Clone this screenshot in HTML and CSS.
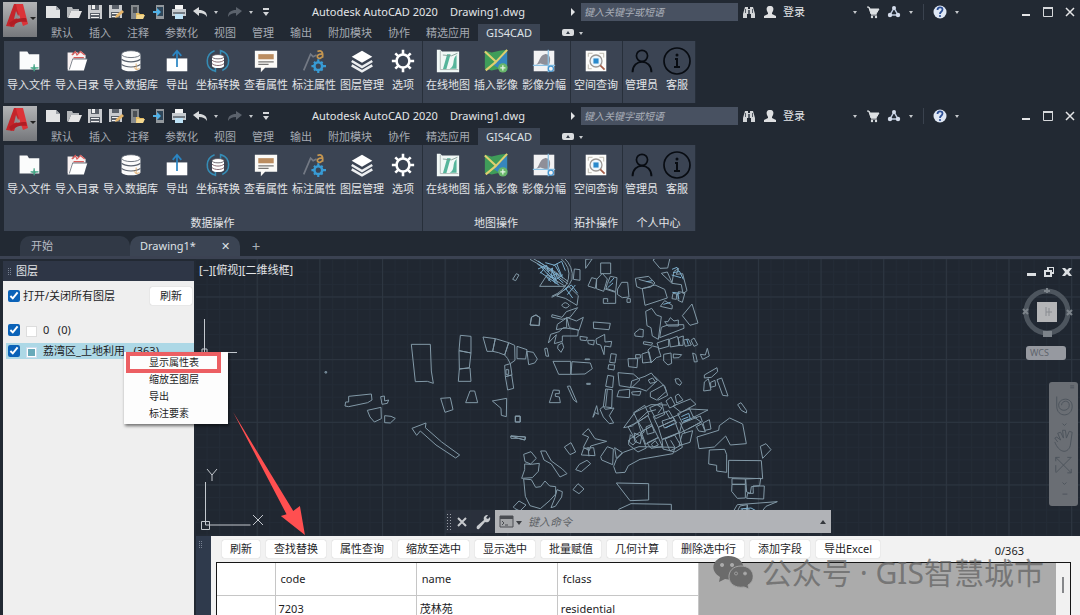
FILE: index.html
```html
<!DOCTYPE html>
<html lang="zh-CN">
<head>
<meta charset="utf-8">
<title>Autodesk AutoCAD 2020 - Drawing1.dwg</title>
<link rel="stylesheet" href="styles.css">
</head>
<body>
<svg class="sprite" aria-hidden="true">
  <symbol id="i-logo" viewBox="0 0 34 35"><path d="M11 2h8l-1 5-7 18-8-1z" fill="#c4252b"/><path d="M13 2h7l5 20-5 2-6-17z" fill="#dc3338"/><path d="M6 21c5-4 10-5 17-5l1 4c-8-1-12 1-16 5z" fill="#b01d24"/><path d="M13 9l3 7-5 1z" fill="#8d8f92"/><path d="M27 15h6l-3 3z" fill="#222"/></symbol>
  <symbol id="i-new" viewBox="0 0 16 16"><path d="M1 2h10l4 4v8H1z" fill="#e2e3e4"/><path d="M11 2v4h4z" fill="#9da2a8"/></symbol>
  <symbol id="i-open" viewBox="0 0 16 16"><path d="M1 13V3h5l1 2h6v2H5L2 14z" fill="#b4b7ba"/><path d="M5 7h11l-3 7H2z" fill="#e6e6e6"/></symbol>
  <symbol id="i-save" viewBox="0 0 16 16"><path d="M1 1h14v14H1z" fill="#c9cbce"/><path d="M4 1h8v5H4zM3 9h10v6H3z" fill="#5a6069"/><path d="M5 1h3v4H5zM4 10h8v1H4zm0 3h8v1H4z" fill="#f1f1f1"/></symbol>
  <symbol id="i-saveas" viewBox="0 0 16 16"><path d="M1 1h13v13H1z" fill="#c9cbce"/><path d="M4 1h7v4H4zM3 8h9v6H3z" fill="#5a6069"/><path d="M4 9h7v1H4zm0 3h6v1H4z" fill="#f1f1f1"/><path d="m7 14 1-3 6-5 2 2-6 5z" fill="#e4b46a"/></symbol>
  <symbol id="i-web" viewBox="0 0 16 16"><path d="M2 1h8v14H2z" fill="#85898c"/><path d="M4 3h4v6H4z" fill="#4b5055"/><path d="M7 9h3l1 1h4l-1 5H7z" fill="#e6bd62"/><path d="M8 11h8l-2 4H7z" fill="#f3d78e"/></symbol>
  <symbol id="i-mobile" viewBox="0 0 16 16"><path d="M6 1h8v14H6z" fill="#93989d"/><path d="M7 3h6v9H7z" fill="#30475a"/><path d="M3 7h4V4l4 4-4 4V9H3z" fill="#4fb1e8"/></symbol>
  <symbol id="i-print" viewBox="0 0 16 16"><path d="M4 1h8v4H4z" fill="#f4f4f4"/><path d="M1 5h14v7H1z" fill="#c7cbcf"/><path d="M2 8h12v2H2z" fill="#727a82"/><path d="M4 10h8v5H4z" fill="#bde1f5"/></symbol>
  <symbol id="i-undo" viewBox="0 0 16 16"><path d="m1 7 6-4v3c5 0 8 2 8 7-2-3-4-4-8-4v3z" fill="#d8dadc"/></symbol>
  <symbol id="i-redo" viewBox="0 0 16 16"><path d="M15 7 9 3v3c-5 0-8 2-8 7 2-3 4-4 8-4v3z" fill="#5b626c"/></symbol>
  <symbol id="i-caret" viewBox="0 0 8 16"><path d="M2 7h4L4 10z" fill="#c5c8cc"/></symbol>
  <symbol id="i-more" viewBox="0 0 8 16"><path d="M1 4h6v2H1zm0 4h6l-3 4z" fill="#d5d7da"/></symbol>
  <symbol id="i-right" viewBox="0 0 8 16"><path d="M2 4v8l4-4z" fill="#e1e3e5"/></symbol>
  <symbol id="i-find" viewBox="0 0 16 16"><path d="M4 3h3v2h2V3h3l2 7v4h-4v-4H6v4H2v-4z" fill="#d3d5d8"/><path d="M7 6h2v4H7zM4 5h1v4H4zm7 0h1v4h-1z" fill="#555c66"/></symbol>
  <symbol id="i-user" viewBox="0 0 16 16"><path d="M8 2c3 0 4 2 3 5l-1 2v1l4 2v2H2v-2l4-2V9L5 7C4 4 5 2 8 2z" fill="#dfe0e2"/></symbol>
  <symbol id="i-cart" viewBox="0 0 16 16"><path d="M2 3h2l1 2h9l-3 5H6L4 4M6 11h6" fill="#dde0e3" stroke="#dde0e3"/><circle cx="7" cy="13" r="1.200" fill="#dde0e3"/><circle cx="11" cy="13" r="1.200" fill="#dde0e3"/></symbol>
  <symbol id="i-app" viewBox="0 0 16 16"><path d="M8 4 4 11h8z" fill="none" stroke="#bfcbe0" stroke-width="1.500"/><circle cx="8" cy="4" r="2" fill="#d4dceb"/><circle cx="4" cy="11" r="2.200" fill="#d4dceb"/><circle cx="12" cy="11" r="2.200" fill="#d4dceb"/></symbol>
  <symbol id="i-help" viewBox="0 0 16 16"><circle cx="8" cy="8" r="6.500" fill="#dfe7f4"/><path d="M5.500 6c0-3.500 5-3.500 5-.5C10.500 8 8 7.500 8 10" stroke="#2c4f95" stroke-width="1.800" fill="none"/><circle cx="8" cy="12" r="1.100" fill="#2c4f95"/></symbol>
  <symbol id="i-min" viewBox="0 0 12 12"><path d="M2 8h8v2H2z" fill="#e4e5e7"/></symbol>
  <symbol id="i-max" viewBox="0 0 12 12"><path d="M1.500 1.500h9v9h-9z" stroke="#d6d8db" fill="none"/><path d="M1 1h10v2H1z" fill="#d6d8db"/></symbol>
  <symbol id="i-close" viewBox="0 0 12 12"><path d="m2 2 8 8m0-8-8 8" stroke="#e4e5e7" stroke-width="1.500"/></symbol>
  <symbol id="i-badge" viewBox="0 0 12 8"><rect width="12" height="7" rx="2" fill="#dadcdf"/><path d="M4 5h4L6 2z" fill="#333b47"/></symbol>

  <symbol id="r-file" viewBox="0 0 28 28"><path d="M3 3h9l2 3h12v18H3z" fill="#fbfcfc"/><path d="M16 22c2 0 4 0 4-4 0 4 2 4 5 4-3 0-5 1-5 4 0-3-2-4-4-4z" fill="#43a484" stroke="#43a484"/></symbol>
  <symbol id="r-dir" viewBox="0 0 28 28"><path d="M3 4h6l1 3 2-4 4 2 2-3 6 5v5H9L5 24H3z" fill="#f8f1f1"/><path d="m8 7 4-4 2 4 4-4 5 4M10 10h12" stroke="#d95b59" stroke-width="1.500" fill="none"/><path d="M8 12h18l-4 13H3z" fill="#fff"/><path d="M5 24 9 11.500h17" stroke="#6d727b" fill="none"/></symbol>
  <symbol id="r-db" viewBox="0 0 28 28"><path d="M3 6v17c3 4 19 4 22 0V6z" fill="#fbfbfb"/><ellipse cx="14" cy="6" rx="11" ry="4" fill="#fff" stroke="#59616d"/><path d="M3 12c5 4 17 4 22 0M3 18c5 4 17 4 22 0" stroke="#59616d" stroke-width="1.300" fill="none"/><path d="M20 17v7m-3-3 3 3 4-1" stroke="#dba55f" fill="none"/></symbol>
  <symbol id="r-export" viewBox="0 0 28 28"><path d="M2 11h24v15H2z" fill="#fff"/><path d="M14 21V3M9 8l5-6 5 6" stroke="#2a86c4" stroke-width="2" fill="none"/></symbol>
  <symbol id="r-convert" viewBox="0 0 28 28"><path d="M10 2C-1 6-1 21 8 25M18 2c11 4 11 19 1 23M6 24l5 2v-5M22 4l-5-2v5" stroke="#358cb5" stroke-width="1.800" fill="none"/><path d="M7 9v11c2 3 12 3 14 0V9z" fill="#fff"/><ellipse cx="14" cy="9" rx="7" ry="2.500" fill="#fff" stroke="#58525a"/><path d="M7 13c3 3 11 3 14 0M7 17c3 3 11 3 14 0" stroke="#75535c" fill="none"/></symbol>
  <symbol id="r-attr" viewBox="0 0 28 28"><path d="M1 2h26v20H13l-5 5v-5H1z" fill="#fbfaf7"/><path d="M5 6h18v6H5z" fill="#bb8d60"/><path d="M5 15h18M5 18h12" stroke="#787775" stroke-width="1.500"/></symbol>
  <symbol id="r-mark" viewBox="0 0 28 28"><path d="m2 25 8-19 3 3 4-2" stroke="#737984" stroke-width="2" fill="none"/><path d="M18 3c4-2 7 0 6 7m0-4c-7-1-8 5-3 5l3-2" stroke="#c49651" stroke-width="2" fill="none"/><circle cx="19" cy="20" r="4.500" stroke="#389bd4" stroke-width="3" fill="none"/><path d="M19 12v3m0 10v3m-8-8h3m10 0h4m-14-5 2 2m6 6 2 2m0-10-2 2m-6 6-2 2" stroke="#389bd4" stroke-width="2.500"/></symbol>
  <symbol id="r-layer" viewBox="0 0 28 28"><path d="m14 2 12 7-12 7L2 9z" fill="#fff"/><path d="m2 14 12 7 12-7M2 19l12 7 12-7" stroke="#eceef0" stroke-width="3" fill="none"/></symbol>
  <symbol id="r-gear" viewBox="0 0 28 28"><circle cx="14" cy="14" r="7.500" stroke="#fff" stroke-width="3" fill="none"/><path d="M14 1v5m0 16v5M1 14h5m16 0h5M5 5l4 4m10 10 4 4m0-18-4 4M9 19l-4 4" stroke="#fff" stroke-width="3"/></symbol>
  <symbol id="r-map" viewBox="0 0 28 28"><path d="M1 1h4l2 2h20v24H1z" fill="#f1f8f6"/><path d="m8 24 5-18h4l-5 18zm8-1c7-3 2-11 8-16v16z" fill="#56b59b"/><path d="M5 2v22h21" stroke="#a8b4b1" fill="none"/><path d="m8 7 10 1 7-3" stroke="#7b9990" fill="none"/></symbol>
  <symbol id="r-image" viewBox="0 0 28 28"><path d="m1 2 8 2 9-2 9-1v24l-9-2-9 2-8-2z" fill="#3f9d59"/><path d="m15 12 12-9v22l-9-2-8-5z" fill="#3686bd"/><path d="m1 3 13 12L27 1M14 15 2 25" stroke="#dfcf70" stroke-width="2.500" fill="none"/><circle cx="22" cy="22" r="5.500" fill="#68b66a"/><path d="M19 22h6m-3-3v6" stroke="#e3f4e3" stroke-width="1.500"/></symbol>
  <symbol id="r-split" viewBox="0 0 28 28"><path d="M2 2h24v24H2z" fill="#f2f2f3"/><path d="M3 19c6-1 5-12 12-13 8-1 7 10 4 14l-9-3z" fill="#8f8f98"/><path d="M19 1v26M1 19h26" stroke="#8bc1e4" stroke-width="1.500"/><circle cx="22" cy="23" r="3" fill="none" stroke="#4898d1" stroke-width="1.500"/></symbol>
  <symbol id="r-query" viewBox="0 0 28 28"><path d="M2 2h24v24H2z" fill="#fcfcfa"/><path d="M5 9V5h5m8 0h5v5M5 18v5h4" stroke="#b6b2a5" fill="none"/><circle cx="14" cy="14" r="7" fill="#edf7fd" stroke="#9b9794" stroke-width="1.500"/><path d="M11 11h6v6h-6z" fill="#2989cc"/><path d="m19 19 5 5" stroke="#a55e4a" stroke-width="2"/></symbol>
  <symbol id="r-admin" viewBox="0 0 28 28"><circle cx="14" cy="8" r="6.500" fill="none" stroke="#080c12" stroke-width="2"/><path d="M3 27c0-16 22-16 22 0" fill="none" stroke="#080c12" stroke-width="2.200"/></symbol>
  <symbol id="r-info" viewBox="0 0 28 28"><circle cx="14" cy="14" r="13" fill="none" stroke="#080c12" stroke-width="1.700"/><circle cx="14" cy="8" r="1.500" fill="#080c12"/><path d="M12 12h2v8m-3 0h6" fill="none" stroke="#080c12" stroke-width="2"/></symbol>
</svg>

<div class="app">
  <header class="head">
    <button class="logo" aria-label="应用程序菜单"><svg><use href="#i-logo"/></svg></button>
    <div class="head-rows">
      <div class="titlebar">
        <div class="quick">
          <svg><use href="#i-new"/></svg><svg><use href="#i-open"/></svg><svg><use href="#i-save"/></svg><svg><use href="#i-saveas"/></svg><svg><use href="#i-web"/></svg><svg><use href="#i-mobile"/></svg><svg><use href="#i-print"/></svg><svg><use href="#i-undo"/></svg><svg class="thin"><use href="#i-caret"/></svg><svg><use href="#i-redo"/></svg><svg class="thin"><use href="#i-caret"/></svg><svg class="thin"><use href="#i-more"/></svg>
        </div>
        <div class="title"><span>Autodesk AutoCAD 2020</span><span>Drawing1.dwg</span></div>
        <svg class="thin"><use href="#i-right"/></svg>
        <input class="search" type="text" placeholder="键入关键字或短语" aria-label="搜索">
        <div class="account"><svg><use href="#i-find"/></svg><svg><use href="#i-user"/></svg><button class="login">登录</button></div>
        <div class="tools"><svg class="thin lead"><use href="#i-caret"/></svg><svg><use href="#i-cart"/></svg><svg><use href="#i-app"/></svg><svg class="thin"><use href="#i-caret"/></svg><i class="sep"></i><svg><use href="#i-help"/></svg><svg class="thin"><use href="#i-caret"/></svg></div>
        <div class="window"><button aria-label="最小化"><svg><use href="#i-min"/></svg></button><button aria-label="最大化"><svg><use href="#i-max"/></svg></button><button aria-label="关闭"><svg><use href="#i-close"/></svg></button></div>
      </div>
      <nav class="menu"><button>默认</button><button>插入</button><button>注释</button><button>参数化</button><button>视图</button><button>管理</button><button>输出</button><button>附加模块</button><button>协作</button><button>精选应用</button><button class="on">GIS4CAD</button><svg class="badge"><use href="#i-badge"/></svg><svg class="thin"><use href="#i-caret"/></svg></nav>
    </div>
  </header>
  <div class="ribbon short">
    <section class="panel"><div class="cmds"><button><svg><use href="#r-file"/></svg>导入文件</button><button><svg><use href="#r-dir"/></svg>导入目录</button><button><svg><use href="#r-db"/></svg>导入数据库</button><button><svg><use href="#r-export"/></svg>导出</button><button><svg><use href="#r-convert"/></svg>坐标转换</button><button><svg><use href="#r-attr"/></svg>查看属性</button><button><svg><use href="#r-mark"/></svg>标注属性</button><button><svg><use href="#r-layer"/></svg>图层管理</button><button><svg><use href="#r-gear"/></svg>选项</button></div></section>
    <section class="panel"><div class="cmds"><button><svg><use href="#r-map"/></svg>在线地图</button><button><svg><use href="#r-image"/></svg>插入影像</button><button><svg><use href="#r-split"/></svg>影像分幅</button></div></section>
    <section class="panel"><div class="cmds"><button><svg><use href="#r-query"/></svg>空间查询</button></div></section>
    <section class="panel tight"><div class="cmds"><button><svg><use href="#r-admin"/></svg>管理员</button><button><svg class="big"><use href="#r-info"/></svg>客服</button></div></section>
  </div>

  <header class="head">
    <button class="logo" aria-label="应用程序菜单"><svg><use href="#i-logo"/></svg></button>
    <div class="head-rows">
      <div class="titlebar">
        <div class="quick">
          <svg><use href="#i-new"/></svg><svg><use href="#i-open"/></svg><svg><use href="#i-save"/></svg><svg><use href="#i-saveas"/></svg><svg><use href="#i-web"/></svg><svg><use href="#i-mobile"/></svg><svg><use href="#i-print"/></svg><svg><use href="#i-undo"/></svg><svg class="thin"><use href="#i-caret"/></svg><svg><use href="#i-redo"/></svg><svg class="thin"><use href="#i-caret"/></svg><svg class="thin"><use href="#i-more"/></svg>
        </div>
        <div class="title"><span>Autodesk AutoCAD 2020</span><span>Drawing1.dwg</span></div>
        <svg class="thin"><use href="#i-right"/></svg>
        <input class="search" type="text" placeholder="键入关键字或短语" aria-label="搜索">
        <div class="account"><svg><use href="#i-find"/></svg><svg><use href="#i-user"/></svg><button class="login">登录</button></div>
        <div class="tools"><svg class="thin lead"><use href="#i-caret"/></svg><svg><use href="#i-cart"/></svg><svg><use href="#i-app"/></svg><svg class="thin"><use href="#i-caret"/></svg><i class="sep"></i><svg><use href="#i-help"/></svg><svg class="thin"><use href="#i-caret"/></svg></div>
        <div class="window"><button aria-label="最小化"><svg><use href="#i-min"/></svg></button><button aria-label="最大化"><svg><use href="#i-max"/></svg></button><button aria-label="关闭"><svg><use href="#i-close"/></svg></button></div>
      </div>
      <nav class="menu"><button>默认</button><button>插入</button><button>注释</button><button>参数化</button><button>视图</button><button>管理</button><button>输出</button><button>附加模块</button><button>协作</button><button>精选应用</button><button class="on">GIS4CAD</button><svg class="badge"><use href="#i-badge"/></svg><svg class="thin"><use href="#i-caret"/></svg></nav>
    </div>
  </header>
  <div class="ribbon">
    <section class="panel"><div class="cmds"><button><svg><use href="#r-file"/></svg>导入文件</button><button><svg><use href="#r-dir"/></svg>导入目录</button><button><svg><use href="#r-db"/></svg>导入数据库</button><button><svg><use href="#r-export"/></svg>导出</button><button><svg><use href="#r-convert"/></svg>坐标转换</button><button><svg><use href="#r-attr"/></svg>查看属性</button><button><svg><use href="#r-mark"/></svg>标注属性</button><button><svg><use href="#r-layer"/></svg>图层管理</button><button><svg><use href="#r-gear"/></svg>选项</button></div><h2>数据操作</h2></section>
    <section class="panel"><div class="cmds"><button><svg><use href="#r-map"/></svg>在线地图</button><button><svg><use href="#r-image"/></svg>插入影像</button><button><svg><use href="#r-split"/></svg>影像分幅</button></div><h2>地图操作</h2></section>
    <section class="panel"><div class="cmds"><button><svg><use href="#r-query"/></svg>空间查询</button></div><h2>拓扑操作</h2></section>
    <section class="panel tight"><div class="cmds"><button><svg><use href="#r-admin"/></svg>管理员</button><button><svg class="big"><use href="#r-info"/></svg>客服</button></div><h2>个人中心</h2></section>
  </div>

  <nav class="files">
    <button class="file">开始</button>
    <button class="file on">Drawing1*<span class="x">✕</span></button>
    <button class="add" aria-label="新建图形">+</button>
  </nav>

  <main class="work">
    <aside class="layers">
      <h1><i class="grip"></i>图层</h1>
      <div class="layer-body">
        <div class="all"><label><input type="checkbox" checked>打开/关闭所有图层</label><button class="btn">刷新</button></div>
        <ul>
          <li><label><input type="checkbox" checked><i class="swatch"></i>0 &nbsp; (0)</label></li>
          <li class="sel"><label><input type="checkbox" checked><i class="swatch fill"></i>荔湾区_土地利用 &nbsp; (363)</label></li>
        </ul>
      </div>
      <menu class="context">
        <li><button class="marked">显示属性表</button></li>
        <li><button>缩放至图层</button></li>
        <li><button>导出</button></li>
        <li><button>标注要素</button></li>
      </menu>
    </aside>

    <section class="view">
      <div class="map">
        <svg class="drawing" width="884" height="278" viewBox="0 0 884 278">
          <defs>
            <pattern id="minor" x="60.700" y="37.500" width="12.530" height="12.530" patternUnits="userSpaceOnUse"><path d="M.5 0v13M0 .5h13" stroke="#232b36" fill="none"/></pattern>
            <pattern id="major" x="60.700" y="37.500" width="62.650" height="62.650" patternUnits="userSpaceOnUse"><path d="M.5 0v63M0 .5h63" stroke="#2d3641" fill="none"/></pattern>
          </defs>
          <rect width="884" height="278" fill="url(#minor)"/><rect width="884" height="278" fill="url(#major)"/>
          <g class="axis"><path d="M8.500 60v37M8 93.500h33M6 90h5v5H6z"/><path d="M9.500 223v43h45M5.500 262.500h8v8h-8z"/><path d="m11 210 5 6 5-6m-5 6v6M57 256l10 10m0-10-10 10"/></g>
          <g class="lots" transform="translate(124 -3) scale(.33333)">
            <path d="M15 347h5v4h-5zM274 265h57l3 80 6 37-18-6-36 1zM421 238l32 3v50l-36-7zM417 284l36 7-5 44-30 4zM418 339l32-3 3 40h-38zM489 243l37 5-8 38h-17zM526 248l40 12-12 37q-20-9-36-11zM566 260l18 8 1 45-14 10q-8-18-17-26zM591 271l30 10-4 28-26-1zM621 286l19 3 12 20-8 12-18 5zM554 328l17-5 5 34-20 5zM558 341h8v14h-8zM556 362l19-5 6 40-18 5zM86 421l68-7 2 18-13 8-57 12-11-2 2-12h9zM182 422l11-2 1 15 12-3-4 10-16 3zM142 463l41-9 1 34-21 10-13-15zM194 479l19 2 13 6-15 14-17-1zM276 517l42-16-2 14 49 43 54 39-12 9-59-39-47-42-11 13zM362 427l29-2 8 36-24 8zM437 440l13-35h14l9 35zM517 435l43-8-1 55-15-4-1-21zM586 480h14v18h-14zM572 540l44 3-2 9-19-5h-22zM631 207l3-23 12-7 13 7-2 24zM578 70l11-17 8 4-10 17zM674 278l7-2 5 25-8-1z"/>
          </g>
          <g class="lots" transform="translate(314 -3) scale(.33333)">
            <path d="m60 10 60 34 54 40M70 8l65 39 40 30M150 5q34 28 25 64t-50 52M160 3q32 30 26 67-12 33-61 54M89 91l22-34 55 34zM140 120l36-29 29 28-4 29-35-21zM193 39l17 2v32l-20-3zM155 148q10-16 23 0-9 16-23 0zM126 176l30 8 13-17 34-12-22 28-25 7-31-7zM142 205l28-19v29l-31 6zM170 184l29 11 21-11-13 39-29-8zM122 235l25-8 13-12 45 7-2 18h-46v16l-24 7 6-27-24 25zM144 268l13-8 4 14-8 15-10-12zM60 207l5-24 14-6 11 8-2 24zM250 198l51 4-4 19-46-4zM210 241l22 3-3 10-18-2zM233 253h20l-2 14-16-4zM258 249l26-14 1 23 20-2-3 17-18-3-2 26-10-29-12-3zM227 10l20-2-20 29zM272 21h30v32h-30zM234 90l11-25 15 4-4 28zM260 70l17-18 15 17-11 37-22-8zM292 83l9-22 20 4-4 42-29-10zM282 98l35 11v33h-37v-14h13v10M323 99l12-20h18l4 44-20 2-15-10zM351 128h10v11h-10zM129 316h53v39h-36zM186 317l55 4 6 17-22 16-42 1zM225 309h14v2h-14zM118 440l12-38 18 1v10h-12v8l12 2 3 17zM172 391l8-1 21 49-10-7zM303 293l16 2-4 26-16-2zM296 326l18 1-2 15-18-3zM293 358l18 3-3 34-21-4zM287 399l20 2-2 54-25-3zM287 450l5-50M376 67l40-6 19 20-13 12-27 5-15-6zM397 98l38-11 29 13 8 26-67 22zM386 70l44 12M429 12l13-9h32l8-6-9 39-23 1zM454 52l18-4 14 32 6-34 14-9-7 18 19-2 13 51-12 9-5-27-28-4zM489 112l11 2-1 16-13-2zM505 107l20 3-8 29-13-6zM451 151l13-17 23 14-1 11zM407 166l18-9 14 20 15 5-9 68-18-10-4-25-12-6zM454 214l19-7 48-1 1 11-73 28zM464 197h10l7-12 11 10 13-3v18h-31zM517 179l29-35 18 57-24 7zM374 231l15-12 11 2-1 22-24-3zM401 257l27 4-4 7-24-4zM414 282l14-12 16 4 9 27-14 4-16 16zM396 294l21-7 7 31-26 3zM354 308h29l-2 27-25-3zM377 296h14v10h-14zM441 261l35-12v22l-29 8zM478 250l24-9 8 27-29 5zM505 245l15-5-1 28h-13zM521 252l14-3 9 18-18 4zM543 253l9-7 11 20-11 5zM461 295l22-4 2 31-11 5-13-12zM490 294l25 2-8 9-17 1zM548 291l9 4 5 22-9 1zM571 295l15 2 6-20 6 23-20 10zM583 357l38-22 2 12-19 17-21 2zM583 378l12-10 8 34-22 3zM602 379l13-6 2 17-15 4zM621 371l14-5 19 54-16-2zM683 446l10-6 17 24-1 7-15-8zM495 369l11-1 9 12-5 8-11-6zM324 350l46 4 20 17-25 24-37-6zM321 422l6-19 32-3-1 25zM365 375l40-14 19-10 18 23-33 31-22-8-25-4zM415 372l13-6 9 13-17 3zM365 408l28-2-4 12-22-2zM421 409l40-22 8 19-29 26-19-9zM434 361l31 31 8 26-30 15"/>
            <path d="m341 515 34-46 48-23 48 1M341 515l26-5 45-42 26-7M371 470l33-22 13 28-33 22zM384 498l30-19 13 30-34 18zM394 528l33-19 18 36-38 20zM356 552l34-24 19 48-25 12-28-22zM354 512l31-14 18 30-29 20zM419 455l36-15 9 35-27 13zM430 482l47-18 16 28-48 22zM445 514l48-22 14 38-51 20zM456 551l51-20 10 43-22 14-36-9zM489 450l52-21 17 16-45 24zM503 473l35-14 56 3-77 39zM516 502l55-22 6 17-69 35zM517 533l31-9-8 35-33 10zM548 480l25 18-39 21M468 435l15-12 13 25-17 8zM496 420l9-6 14 18-19 9zM442 447l14 9-12 16M467 466l13 22 32-15M456 495l34-11 10 17-37 15zM408 513l17-8 8 24-21 6zM373 531l22 10-4 22-17-7zM411 561l34-17 12 28-34 5zM465 549l29-12 18 31-32 17zM482 553l12 20m15-75 16 34m12-77 13 28M561 543l65-20 2-14 31-23 39 18 11 59-48 4-14-27-34 33-46 5zM559 512l17-9 10 25-20-3zM579 501l19-10 5 28-18 4zM361 536l19 19-11 12-11-9zM424 565l12-11 9 13-15 6zM217 535l18-17 20 30 35 8-48 14-4 14-18-10 16-31zM221 577l30-2 4 24-41-2zM234 573l3 28M197 641l11-16 23-12 11 10-28 24zM272 602l20-30 18 7-2 47-33-14zM314 575l23 15-18 17zM319 610l21-21 47-17 108 2-6 19-99 17-35 19-10 20-27 2-7-20zM163 573l20-13 14 28-17 8zM92 585h15l17 30 33 24 14 14-21 10-26-39-22-12zM41 595l22-8 16 20-17 17-17-7zM44 624l20 1 24-3-3 24-18 19-32 2 9-26zM41 669l23 2 13 23 15-2 13-17 14 15 18 2v22l-17 19-29 25-31-9-14-28zM135 725l6-24 16 6-2 16-19 28-13 4zM189 701l15-18 18 16-15 14zM10 753l17-18 21 12-18 18-15-7zM319 681l97 2v49l-56 2zM326 760l37-17 121 2v26l-152 3zM598 582l46-2 6 16v53l-30-4v-17l-24-4zM656 613l98 1 4 54-103-3zM666 668l40 1v16h-40zM707 669l45-2-3 22-25 3-3 20-11-4zM666 685h40v41l-24 1-17-21zM729 690h34l-2 39-51-2 3-15h17zM751 571l17-8 15 18-25 26zM669 768l13-22 120-9-34 14-20 25M680 770l10-20 22-4-4 26m4-25 2 35m-38-5 24-19 19 2M16 481h15v17H16zM3 540l44 3-2 9-20-5zM270 460l10-9 6 9 26-4-14 23 13 22-13 2-18-20zM249 482l11-33 5 26-9-5-7 14zM230 382h11v3h-11z"/>
            <path class="hot" d="m82 24 24 15 34 35m-50-26 58 40M84 15l67 47m-60-10 19-24 5 19 13-11-4 25 17-9-5 20 23-16M92 32l25 27M106 20l29 8 18 31m-42-7 33 30m-34-19 12 14m2-40 13 32M116 74l8-17 12 26m5-19 19 17M84 39l23-10M130 29l25-13 11 28M140 23l18 44M161 103l23-16 19 25M165 95l23 31M172 116l24-29"/>
            <path class="hot" d="m298 82 14-16m-19 29 16-14M486 40l15-6 5 13-17 3m-4 7 28 8m-5-20 12 25M409 77l18-3m60 35 24 3m-9 0 5 18M514 482l22-10 5 16-22 8M515 491l20-8M467 516l24-13M692 759l31-3 22 12M460 145l22-6M530 249l5 17"/>
          </g>
        </svg>
        <span class="view-label">[−][俯视][二维线框]</span>
        <div class="doc-controls"><button aria-label="最小化"><svg viewBox="0 0 12 12"><path d="M2 7h9v3H2z"/></svg></button><button aria-label="还原"><svg viewBox="0 0 12 12"><path fill-rule="evenodd" d="M4 1h7v7H9v3H1V4h3zm2 1v2h3v2h1V2zM3 6v3h4V6z"/></svg></button><button aria-label="关闭"><svg viewBox="0 0 12 12"><path d="M1 2h3l2 2 2-2h3L8 6l3 4H8L6 8l-2 2H1l3-4z"/></svg></button></div>
        <svg class="compass" viewBox="0 0 52 52"><circle cx="26" cy="26" r="21" fill="none" stroke="#4d555e" stroke-width="5"/><path d="M16 16h20v20H16z" fill="#b4b5b7"/><path d="M25 21v9m3-8v8m-3-4h6" stroke="#888b90" fill="none"/><path d="M26 2v5m-3-2h6M23 46h7v4h-7zM2 23l5 5m-5 0 5-5M46 24l5 5m-5 0 5-5" stroke="#7c838a" stroke-width="2" fill="#7c838a"/></svg>
        <button class="wcs">WCS</button>
        <div class="navbar" aria-label="导航栏"><svg viewBox="0 0 30 124"><g fill="none" stroke="#4d545c"><path d="M22 4h4m-4 2h4"/><path d="M8 15v10c0 12 16 12 16 0 0-10-14-9-14-1 0 7 11 7 11 0 0-6-8-5-8 0M14 43l2 2 2-2M9 62l-3-4 2-1 4 3-3-7 3-1 3 6-1-8 3 0 1 8 3-7 3 1-2 14c-3 9-12 7-16-4M7 78l16 16m0-16L7 94m0-16h4m-4 0v4m16 8v4h-4M23 78h-4m-12 8v7M14 104l2 2 2-2m-4 12h5"/></g></svg></div>
        <div class="command">
          <i class="dots"></i>
          <button aria-label="关闭命令行"><svg viewBox="0 0 12 12"><path d="m2 2 8 8m0-8-8 8" stroke="#c6c9cd" stroke-width="2"/></svg></button>
          <button aria-label="自定义"><svg viewBox="0 0 16 16"><path d="m2 12 7-6c-1-3 1-5 4-5l-2 3 2 1 2-2c1 4-2 6-5 5l-6 7c-2 1-3-1-2-3z" fill="#c6c9cd"/></svg></button>
          <div class="cmd-field"><svg viewBox="0 0 24 14"><path d="M1 1h13v11H1z" fill="#a3a5a8" stroke="#4a4d52"/><path d="M1 1h13v3H1z" fill="#4a4d52"/><path d="m3 6 2 2-2 2m3 0h3" stroke="#4a4d52" fill="none"/><path d="M17 6h6l-3 4z" fill="#3c3f44"/></svg><input type="text" placeholder="键入命令" aria-label="命令"><svg class="up" viewBox="0 0 8 8"><path d="M1 6h6L4 2z" fill="#35383d"/></svg></div>
        </div>
      </div>

      <div class="attrs">
        <div class="strip"><i class="grip"></i></div>
        <div class="attr-body">
          <div class="attr-bar"><button class="btn">刷新</button><button class="btn">查找替换</button><button class="btn">属性查询</button><button class="btn">缩放至选中</button><button class="btn">显示选中</button><button class="btn">批量赋值</button><button class="btn">几何计算</button><button class="btn">删除选中行</button><button class="btn">添加字段</button><button class="btn">导出Excel</button><output>0/363</output></div>
          <div class="grid">
            <table>
              <thead><tr><th class="row-no"></th><th>code</th><th>name</th><th>fclass</th></tr></thead>
              <tbody><tr><td></td><td>7203</td><td>茂林苑</td><td>residential</td></tr></tbody>
            </table>
            <div class="blank"></div>
            <div class="scroll"><i></i></div>
          </div>
          <div class="watermark"><svg viewBox="0 0 40 33"><path fill-rule="evenodd" d="M15 0c19 0 21 21 4 24l-7-1-6 3 1-5C-6 13 2 0 15 0zM9 7a2 2 0 1 0 .1 0zm10 0a2 2 0 1 0 .1 0z"/><path fill-rule="evenodd" stroke="#a5a5a5" d="M28 10c13 0 16 14 7 19l1 4-5-2c-19 3-20-21-3-21zm-5 6a1.500 1.500 0 1 0 .1 0zm9 0a1.500 1.500 0 1 0 .1 0z"/></svg><span>公众号 · GIS智慧城市</span></div>
        </div>
      </div>
      <svg class="arrow" viewBox="0 0 215 368"><path d="M0 0 180 296 200 281 215 368 143 311 160 306z" fill="#ff4f50"/></svg>
    </section>
  </main>
</div>
</body>
</html>
```

FILE: styles.css
```css
* { box-sizing: border-box; }
body {
  margin: 0;
  background: #222933;
  color: #e3e5e8;
  font: 11px/16px "Noto Sans", "Noto Sans CJK SC", sans-serif;
}
button, input { font: inherit; color: inherit; }
button { padding: 0; border: 0; background: none; }
svg { flex: none; display: block; }
.sprite { position: absolute; width: 0; height: 0; }
.app { display: flex; flex-direction: column; height: 100vh; overflow: hidden; }

/* title bar and ribbon tabs */
.head { display: flex; flex: none; height: 41px; padding-left: 3px; }
.logo { width: 34px; height: 35px; margin: 2px 6px 0 0; background: linear-gradient(#b3b4b6, #75777b); }
.logo svg { width: 34px; height: 35px; }
.head-rows { flex: 1; min-width: 0; }
.titlebar { display: flex; align-items: center; height: 24px; }
.titlebar svg { width: 16px; height: 16px; }
.titlebar .thin, .menu .thin { width: 8px; height: 16px; }
.quick { display: flex; gap: 5px; width: 269px; padding-left: 2px; }
.quick .thin { margin: 0 -1px; }
.quick .thin + svg { margin-left: 3px; }
.title { display: flex; gap: 12px; width: 257px; white-space: nowrap; }
.search {
  flex: 0 1 157px; min-width: 40px; height: 18px; margin-left: 4px; padding: 0 3px;
  border: 0; background: #485161; font-size: 10px; font-style: italic;
}
.search::placeholder { color: #a8aeb8; opacity: 1; }
.account { display: flex; align-items: center; gap: 5px; margin-left: 3px; }
.login { margin-left: 0; }
.tools { display: flex; align-items: center; gap: 5px; margin-left: auto; }
.tools .lead { margin-right: 1px; }
.sep { width: 1px; height: 16px; margin: 0 3px; background: #3a424e; }
.window { display: flex; gap: 10px; margin: 0 4px 0 59px; }
.window svg { width: 12px; height: 12px; }
.menu { display: flex; height: 17px; align-items: center; color: #a5aab2; }
.menu button { height: 17px; padding: 0 8px; line-height: 17px; white-space: nowrap; }
.menu .on { background: #3b4453; color: #dfe2e6; }
.menu .badge { width: 12px; height: 8px; margin: 0 3px 0 22px; }

/* ribbon */
.ribbon { display: flex; flex: none; height: 86px; margin-left: 4px; }
.ribbon.short { height: 62px; margin-bottom: 1px; }
.panel { display: flex; flex-direction: column; justify-content: space-between; padding: 4px 2px 0 1px; background: #3b4453; border-right: 1px solid #272f3a; }
.panel.tight { padding: 4px 1px 0 0; }
.cmds { display: flex; }
.cmds button { display: flex; flex-direction: column; align-items: center; min-width: 34px; padding: 0 2px; white-space: nowrap; }
.cmds svg { width: 24px; height: 24px; margin: 4px 0; }
.cmds .big { width: 28px; height: 28px; margin: 2px 0; }
.panel h2 { margin: 0; font: inherit; text-align: center; }

/* drawing tabs */
.files { display: flex; flex: none; height: 28px; padding: 5px 0 0 20px; border-bottom: 3px solid #3b4252; }
.file { width: 110px; padding: 0 11px; border-radius: 10px 10px 0 0; background: #313946; color: #b8bcc3; text-align: left; }
.file.on { display: flex; justify-content: space-between; align-items: center; padding: 0 10px; background: #3b4453; color: #dee1e5; }
.add { width: 20px; margin-left: 6px; color: #a9aeb6; font-size: 15px; }

/* layer list */
.work { display: grid; grid-template-columns: 196px 1fr; flex: 1; min-height: 0; }
.layers { position: relative; z-index: 2; display: flex; flex-direction: column; padding: 2px 2px 0 3px; }
.layers h1 { display: flex; align-items: center; gap: 5px; height: 20px; margin: 0; padding-left: 5px; background: #2e3646; font: inherit; }
.grip { width: 3px; height: 7px; border: dotted #788292; border-width: 0 1px; }
.layer-body { flex: 1; background: #efefef; color: #1d1d1f; }
.layers label { display: flex; align-items: center; white-space: nowrap; }
.layers input { width: 12px; height: 12px; margin: 0 3px 0 0; accent-color: #0a62b8; }
.all { display: flex; justify-content: space-between; align-items: center; padding: 6px 2px 0 5px; }
.btn { flex: none; height: 18px; padding: 0 8px; border-radius: 2px; background: #fff; color: #1d1d1f; box-shadow: 0 0 1px #aaa; white-space: nowrap; line-height: 18px; }
.all .btn { padding: 0 10px; }
.layers ul { margin: 17px 0 0; padding: 0; list-style: none; }
.layers li { padding-left: 5px; }
.layers ul li { margin-bottom: 5px; }
.layers ul .sel { background: linear-gradient(#add8e6, #add8e6) 3px 0 no-repeat; }
.swatch { width: 11px; height: 11px; margin: 2px 6px 0 3px; border: 1px solid #ddd; background: #fff; }
.swatch.fill { border: 2px solid #fff; background: #68aaba; outline: 1px solid #cde; outline-offset: -1px; }
.context { position: absolute; left: 124px; top: 93px; width: 104px; margin: 0; padding: 2px; background: #fdfdfd; box-shadow: 1px 2px 3px #0008; color: #1d1d1f; font-size: 10px; list-style: none; }
.context li { padding: 0 0 0 2px; height: 17px; }
.context button { width: 91px; height: 17px; padding-left: 21px; text-align: left; line-height: 17px; }
.context .marked { outline: 4px solid #ec5f63; outline-offset: -2px; }

/* model space */
.view { position: relative; display: grid; grid-template-rows: 1fr 79px; min-width: 0; }
.map { position: relative; overflow: hidden; background: #202731; }
.drawing { position: absolute; left: 0; top: 0; }
.lots path { fill: none; stroke: #8299a7; vector-effect: non-scaling-stroke; }
.lots .hot { stroke: #7baecd; }
.axis { fill: none; stroke: #c3c8ce; }
.view-label { position: absolute; left: 3px; top: 3px; }
.doc-controls { position: absolute; right: 7px; top: 7px; display: flex; gap: 6px; fill: #dcdfe2; }
.doc-controls svg { width: 12px; height: 12px; }
.compass { position: absolute; right: 7px; top: 27px; width: 52px; height: 52px; }
.wcs { position: absolute; right: 14px; top: 87px; width: 40px; height: 14px; padding-left: 4px; border-radius: 3px; background: #9699a0; color: #5f646c; font-size: 9px; line-height: 14px; text-align: left; }
.navbar { position: absolute; right: 2px; top: 123px; width: 29px; height: 124px; border-radius: 3px; background: #6a6e74; }
.command { position: absolute; left: 250px; right: 249px; bottom: 3px; display: flex; align-items: center; height: 23px; background: #2b323de0; }
.command button svg { width: 16px; height: 16px; }
.command button:first-of-type svg { width: 12px; height: 12px; margin: 0 7px 0 5px; }
.dots { width: 5px; height: 17px; background: radial-gradient(circle, #9aa0a8 1px, transparent 1px) 0 0 / 3px 3px; }
.cmd-field { display: flex; flex: 1; align-items: center; gap: 5px; height: 23px; margin-left: 4px; padding: 0 4px; background: #c4c5c8e0; }
.cmd-field svg { width: 24px; height: 14px; }
.cmd-field .up { width: 8px; height: 8px; }
.cmd-field input { flex: 1; min-width: 0; padding: 0; border: 0; background: none; font-style: italic; }
.cmd-field input::placeholder { color: #5f6368; opacity: 1; }

/* attribute table */
.attrs { position: relative; display: grid; grid-template-columns: 15px 1fr; min-height: 0; color: #1d1d1f; }
.strip { padding: 5px 3px; background: #2f3a4c; }
.strip .grip { display: block; }
.attr-body { position: relative; min-width: 0; overflow: hidden; padding: 4px 9px 0 5px; background: #f2f2f2; }
.attr-bar { display: flex; gap: 6px; height: 22px; padding-left: 6px; }
.attr-bar output { margin: 3px 47px 0 auto; }
.grid { display: flex; height: 60px; border: 1px solid #161616; border-bottom: 0; }
table { flex: none; width: 482px; border-collapse: collapse; table-layout: fixed; background: #fff; }
tr { height: 32px; }
tbody tr { height: 28px; }
th, td { padding: 0 5px; border: solid #c6c6c6; border-width: 0 1px 1px 0; font-weight: 400; text-align: left; }
th:first-child { width: 58px; }
td { padding: 0 3px; }
.blank { flex: 1; background: #ababab; }
.scroll { width: 14px; background: #f1f1f1; }
.scroll i { display: block; width: 2px; height: 16px; margin: 14px 6px; background: #85878a; }
.watermark { position: absolute; right: 36px; top: 20px; display: flex; align-items: center; gap: 9px; color: #626262b8; font-size: 30px; line-height: 32px; white-space: nowrap; }
.watermark svg { width: 40px; height: 33px; fill: #6b6b6b; }
.arrow { position: absolute; left: 37px; bottom: 80px; width: 72px; height: 123px; }
```
